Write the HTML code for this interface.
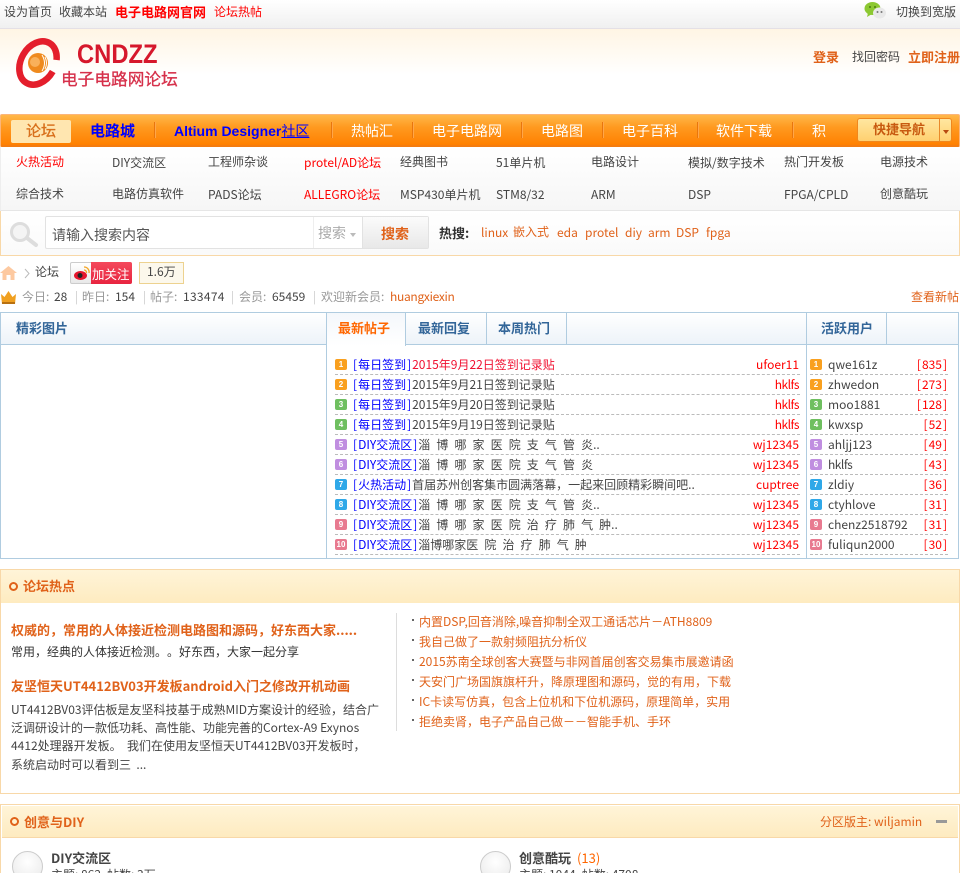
<!DOCTYPE html>
<html><head><meta charset="utf-8"><style>
html{margin:0;padding:0;background:#fff;height:873px;overflow:hidden}
body{margin:0;padding:0;background:#fff;width:960px;height:873px;overflow:hidden;position:relative;font:12px/16px "WenQuanYi Zen Hei","Noto Sans CJK SC",sans-serif;color:#444;text-spacing-trim:space-all}
.t{position:absolute;white-space:nowrap;line-height:16px}
.b{position:absolute;box-sizing:border-box}
.nav{font-size:14px;top:123px;color:#fff}
.o{color:#e0621a}.r{color:#f00}.u{color:#00f}.w{color:#fff}
.bd{font-weight:bold}
.h{font-size:13px}
.sep{position:absolute;top:122px;width:1px;height:16px;background:#e8760c;border-right:1px solid #ffa64a}
.n{position:absolute;width:12px;height:11px;border-radius:2px;color:#fff;font:bold 8px/11px "Liberation Sans",sans-serif;text-align:center}
.d{position:absolute;height:0;border-top:1px dashed #bbb}
.tab{font-weight:bold;color:#369;font-size:13px}
.k{padding:0 1px}
.sp{word-spacing:3.400px}
.dot{position:absolute;left:412px;width:2px;height:2px;background:#666}
</style></head><body>
<div class="b" style="left:0;top:0;width:960px;height:29px;background:linear-gradient(#fff,#f0f0f0);border-bottom:1px solid #e4e0e6"></div>
<span class="t" style="left:4px;top:4px">设为首页</span>
<span class="t" style="left:59px;top:4px">收藏本站</span>
<span class="t bd r" style="left:115px;top:4px;font-size:13px">电子电路网官网</span>
<span class="t r" style="left:214px;top:4px">论坛热帖</span>
<svg class="b" style="left:864px;top:1px" width="23" height="19" viewBox="0 0 23 19"><ellipse cx="8.500" cy="7.500" rx="8" ry="6.500" fill="#8cc832"/><path d="M4 12l-1 4 5-3z" fill="#8cc832"/><ellipse cx="15.500" cy="12" rx="6.500" ry="5.500" fill="#e9e9e9"/><circle cx="13.500" cy="11" r="1" fill="#777"/><circle cx="17.500" cy="11" r="1" fill="#777"/><circle cx="6" cy="6" r="1" fill="#4a7a10"/><circle cx="11" cy="6" r="1" fill="#4a7a10"/></svg>
<span class="t" style="left:896px;top:4px">切换到宽版</span>

<div class="b" style="left:0;top:29px;width:960px;height:46px;background:linear-gradient(#fff5e4,#fff)"></div>
<svg class="b" style="left:14px;top:38px" width="48" height="52" viewBox="0 0 48 52"><ellipse cx="24" cy="25" rx="17" ry="23" transform="rotate(30 24 25)" fill="none" stroke="#e41e2c" stroke-width="6.500" stroke-dasharray="114 13"/><circle cx="24" cy="25" r="10" fill="#ef8a1e"/><circle cx="21" cy="24" r="5" fill="#f9b05a"/><path d="M28 17q5 8 0 16M31 19q3 6 0 12" stroke="#fff" fill="none"/></svg>
<span class="t" style="left:77px;top:41px;font:bold 27px/27px 'Liberation Sans',sans-serif;color:#d6182c;transform:scaleX(.88);transform-origin:left top">CNDZZ</span>
<span class="t" style="left:61px;top:69px;font-size:16.700px;line-height:19px;color:#d6304a;-webkit-text-stroke:.3px #d6304a">电子电路网论坛</span>
<span class="t bd o h" style="left:813px;top:49px">登录</span>
<span class="t" style="left:852px;top:49px">找回密码</span>
<span class="t bd o h" style="left:908px;top:49px">立即注册</span>

<div class="b" style="left:0;top:114px;width:960px;height:33px;border:1px solid #fcb57a;border-bottom:2px solid #f47c10;background:linear-gradient(#ffb84a,#ff9a20 40%,#ff8000);border-radius:2px"></div>
<div class="b" style="left:11px;top:120px;width:60px;height:23px;background:#ffe6b0;border-radius:2px"></div>
<span class="t nav" style="left:26px;color:#d8701c;font-size:15px;-webkit-text-stroke:.3px #d8701c">论坛</span>
<span class="t nav bd" style="left:90px;color:#00f;font-size:15px">电路城</span>
<span class="t nav bd" style="left:174px;color:#00f;font-family:'Liberation Sans','WenQuanYi Zen Hei',sans-serif">Altium Designer<u style="font-weight:normal">社区</u></span>
<span class="t nav" style="left:351px">热帖汇</span>
<span class="t nav" style="left:432px">电子电路网</span>
<span class="t nav" style="left:541px">电路图</span>
<span class="t nav" style="left:622px">电子百科</span>
<span class="t nav" style="left:716px">软件下载</span>
<span class="t nav" style="left:812px">积</span>
<i class="sep" style="left:154px"></i><i class="sep" style="left:331px"></i><i class="sep" style="left:412px"></i><i class="sep" style="left:521px"></i><i class="sep" style="left:602px"></i><i class="sep" style="left:697px"></i><i class="sep" style="left:792px"></i>
<div class="b" style="left:857px;top:118px;width:95px;height:24px;background:linear-gradient(#ffe7a0,#ffd070);border:1px solid #f0871e;border-radius:3px"></div>
<div class="b" style="left:939px;top:119px;width:1px;height:22px;background:#e98a2a"></div>
<span class="t bd h" style="left:873px;top:121px;color:#c85a10">快捷导航</span>
<div class="b" style="left:943px;top:130px;border:3px solid transparent;border-top:4px solid #b84a10;border-bottom:0"></div>

<div class="b" style="left:0;top:147px;width:960px;height:64px;background:linear-gradient(#fff,#f6f6f6);border-bottom:1px solid #e6e6e6;border-left:1px solid #eee"></div>
<span class="t r" style="left:16px;top:154px">火热活动</span>
<span class="t" style="left:112px;top:155px">DIY交流区</span>
<span class="t" style="left:208px;top:154px">工程师杂谈</span>
<span class="t r" style="left:304px;top:155px">protel/AD论坛</span>
<span class="t" style="left:400px;top:154px">经典图书</span>
<span class="t" style="left:496px;top:155px">51单片机</span>
<span class="t" style="left:591px;top:154px">电路设计</span>
<span class="t" style="left:688px;top:155px">模拟/数字技术</span>
<span class="t" style="left:784px;top:154px">热门开发板</span>
<span class="t" style="left:880px;top:154px">电源技术</span>
<span class="t" style="left:16px;top:186px">综合技术</span>
<span class="t" style="left:112px;top:186px">电路仿真软件</span>
<span class="t" style="left:208px;top:187px">PADS论坛</span>
<span class="t r" style="left:304px;top:187px">ALLEGRO论坛</span>
<span class="t" style="left:400px;top:187px">MSP430单片机</span>
<span class="t" style="left:496px;top:187px">STM8/32</span>
<span class="t" style="left:591px;top:187px">ARM</span>
<span class="t" style="left:688px;top:187px">DSP</span>
<span class="t" style="left:784px;top:187px">FPGA/CPLD</span>
<span class="t" style="left:880px;top:186px">创意酷玩</span>

<div class="b" style="left:0;top:211px;width:960px;height:45px;background:linear-gradient(#fff,#fafafa);border:1px solid #f8d8a8;border-top:0"></div>
<svg class="b" style="left:8px;top:221px" width="31" height="27" viewBox="0 0 31 27"><circle cx="12" cy="11" r="8.500" fill="#f4f4f4" stroke="#ddd" stroke-width="3"/><path d="M19 17l9 7" stroke="#ddd" stroke-width="4" stroke-linecap="round"/></svg>
<div class="b" style="left:45px;top:216px;width:384px;height:33px;border:1px solid #e2e2e2;border-radius:2px;background:#fff"></div>
<div class="b" style="left:313px;top:217px;width:1px;height:31px;background:#eee"></div>
<div class="b" style="left:362px;top:217px;width:66px;height:31px;background:linear-gradient(#fbfbfb,#e8e8e8);border-left:1px solid #e2e2e2"></div>
<span class="t" style="left:52px;top:227px;font-size:14px;color:#555">请输入搜索内容</span>
<span class="t" style="left:318px;top:225px;font-size:14px;color:#aaa">搜索</span>
<div class="b" style="left:350px;top:233px;border:3.500px solid transparent;border-top:4px solid #bbb;border-bottom:0"></div>
<span class="t bd o" style="left:381px;top:226px;font-size:14px">搜索</span>
<span class="t bd h" style="left:439px;top:225px;color:#333">热搜:</span>
<span class="t o" style="left:481px;top:225px">linux</span>
<span class="t o" style="left:513px;top:224px">嵌入式</span>
<span class="t o" style="left:557px;top:225px">eda</span>
<span class="t o" style="left:585px;top:225px">protel</span>
<span class="t o" style="left:625px;top:225px">diy</span>
<span class="t o" style="left:648px;top:225px">arm</span>
<span class="t o" style="left:676px;top:225px">DSP</span>
<span class="t o" style="left:706px;top:225px">fpga</span>

<svg class="b" style="left:0;top:266px" width="17" height="14" viewBox="0 0 17 14"><path d="M8.500 0L0 7h2.500v7h4V9h4v5h4V7H17z" fill="#fdc9a0"/></svg>
<svg class="b" style="left:24px;top:268px" width="6" height="11" viewBox="0 0 6 11"><path d="M1 1l4 4.500L1 10" fill="none" stroke="#bbb"/></svg>
<span class="t" style="left:35px;top:264px">论坛</span>
<div class="b" style="left:70px;top:262px;width:62px;height:22px;background:linear-gradient(#fff,#e8e8e8);border:1px solid #ccc;border-radius:2px"></div>
<div class="b" style="left:91px;top:262px;width:41px;height:22px;background:linear-gradient(#f4495c,#e82440);border-radius:0 2px 2px 0"></div>
<svg class="b" style="left:73px;top:265px" width="18" height="16" viewBox="0 0 18 16"><ellipse cx="7.500" cy="10.500" rx="6.500" ry="4.500" fill="#e6162d"/><circle cx="7" cy="10.500" r="2.500" fill="#222"/><path d="M11 2a5 5 0 0 1 5 6M11 5a2.500 2.500 0 0 1 2.500 3" fill="none" stroke="#f5a623" stroke-width="1.300"/></svg>
<span class="t w" style="left:92px;top:266px;font-size:12.500px">加关注</span>
<div class="b" style="left:139px;top:262px;width:45px;height:22px;background:#fcf8ec;border:1px solid #edd28f"></div>
<span class="t" style="left:147px;top:264px">1.6万</span>

<svg class="b" style="left:1px;top:290px" width="15" height="15" viewBox="0 0 15 15"><path d="M0 4l3.500 3L7.500 1l4 6L15 4l-1 10H1z" fill="#f0a020"/><rect x="1" y="12" width="13" height="2" fill="#b87010"/></svg>
<span class="t" style="left:22px;top:289px;color:#999">今日:</span><span class="t" style="left:54px;top:289px">28</span>
<span class="t" style="left:75px;top:289px;color:#ccc">|</span>
<span class="t" style="left:82px;top:289px;color:#999">昨日:</span><span class="t" style="left:115px;top:289px">154</span>
<span class="t" style="left:143px;top:289px;color:#ccc">|</span>
<span class="t" style="left:150px;top:289px;color:#999">帖子:</span><span class="t" style="left:183px;top:289px;letter-spacing:.3px">133474</span>
<span class="t" style="left:231px;top:289px;color:#ccc">|</span>
<span class="t" style="left:239px;top:289px;color:#999">会员:</span><span class="t" style="left:272px;top:289px">65459</span>
<span class="t" style="left:313px;top:289px;color:#ccc">|</span>
<span class="t" style="left:321px;top:289px;color:#999">欢迎新会员:</span><span class="t" style="left:390px;top:289px;color:#e0621a;letter-spacing:-.3px">huangxiexin</span>
<span class="t o" style="left:911px;top:289px">查看新帖</span>

<div class="b" style="left:0;top:312px;width:959px;height:247px;border:1px solid #b0cce0"></div>
<div class="b" style="left:1px;top:313px;width:957px;height:32px;background:linear-gradient(#fff,#edf3f9);border-bottom:1px solid #b0cce0"></div>
<div class="b" style="left:326px;top:313px;width:1px;height:245px;background:#b0cce0"></div>
<div class="b" style="left:806px;top:313px;width:1px;height:245px;background:#b0cce0"></div>
<div class="b" style="left:327px;top:313px;width:79px;height:33px;background:linear-gradient(#f4f7fb,#fff);border-right:1px solid #b0cce0"></div>
<div class="b" style="left:486px;top:313px;width:1px;height:32px;background:#b0cce0"></div>
<div class="b" style="left:566px;top:313px;width:1px;height:32px;background:#b0cce0"></div>
<div class="b" style="left:886px;top:313px;width:1px;height:32px;background:#b0cce0"></div>
<span class="t tab" style="left:16px;top:320px">精彩图片</span>
<span class="t tab" style="left:338px;top:320px;color:#f60">最新帖子</span>
<span class="t tab" style="left:418px;top:320px">最新回复</span>
<span class="t tab" style="left:498px;top:320px">本周热门</span>
<span class="t tab" style="left:821px;top:320px">活跃用户</span>

<i class="n" style="left:335px;top:359px;background:#f9a01f">1</i><span class="t" style="left:352px;top:357px"><span class="u"><span class="k">[</span>每日签到<span class="k">]</span></span><span style="color:#f01030">2015年9月22日签到记录贴</span></span>
<i class="n" style="left:335px;top:379px;background:#f9a01f">2</i><span class="t" style="left:352px;top:377px"><span class="u"><span class="k">[</span>每日签到<span class="k">]</span></span>2015年9月21日签到记录贴</span>
<i class="n" style="left:335px;top:399px;background:#6fbf60">3</i><span class="t" style="left:352px;top:397px"><span class="u"><span class="k">[</span>每日签到<span class="k">]</span></span>2015年9月20日签到记录贴</span>
<i class="n" style="left:335px;top:419px;background:#6fbf60">4</i><span class="t" style="left:352px;top:417px"><span class="u"><span class="k">[</span>每日签到<span class="k">]</span></span>2015年9月19日签到记录贴</span>
<i class="n" style="left:335px;top:439px;background:#c08ee0">5</i><span class="t sp" style="left:352px;top:437px"><span class="u"><span class="k">[</span>DIY交流区<span class="k">]</span></span>淄 博 哪 家 医 院 支 气 管 炎..</span>
<i class="n" style="left:335px;top:459px;background:#c08ee0">6</i><span class="t sp" style="left:352px;top:457px"><span class="u"><span class="k">[</span>DIY交流区<span class="k">]</span></span>淄 博 哪 家 医 院 支 气 管 炎</span>
<i class="n" style="left:335px;top:479px;background:#2fa8e8">7</i><span class="t" style="left:352px;top:477px"><span class="u"><span class="k">[</span>火热活动<span class="k">]</span></span>首届苏州创客集市圆满落幕，一起来回顾精彩瞬间吧..</span>
<i class="n" style="left:335px;top:499px;background:#2fa8e8">8</i><span class="t sp" style="left:352px;top:497px"><span class="u"><span class="k">[</span>DIY交流区<span class="k">]</span></span>淄 博 哪 家 医 院 支 气 管 炎..</span>
<i class="n" style="left:335px;top:519px;background:#e87a90">9</i><span class="t sp" style="left:352px;top:517px"><span class="u"><span class="k">[</span>DIY交流区<span class="k">]</span></span>淄 博 哪 家 医 院 治 疗 肺 气 肿..</span>
<i class="n" style="left:335px;top:539px;background:#e87a90">10</i><span class="t sp" style="left:352px;top:537px"><span class="u"><span class="k">[</span>DIY交流区<span class="k">]</span></span>淄博哪家医 院 治 疗 肺 气 肿</span>

<span class="t r" style="right:161px;top:357px">ufoer11</span>
<span class="t r" style="right:161px;top:377px;letter-spacing:-.5px">hklfs</span>
<span class="t r" style="right:161px;top:397px;letter-spacing:-.5px">hklfs</span>
<span class="t r" style="right:161px;top:417px;letter-spacing:-.5px">hklfs</span>
<span class="t r" style="right:161px;top:437px">wj12345</span>
<span class="t r" style="right:161px;top:457px">wj12345</span>
<span class="t r" style="right:161px;top:477px">cuptree</span>
<span class="t r" style="right:161px;top:497px">wj12345</span>
<span class="t r" style="right:161px;top:517px">wj12345</span>
<span class="t r" style="right:161px;top:537px">wj12345</span>

<i class="d" style="left:335px;top:374px;width:465px"></i><i class="d" style="left:335px;top:394px;width:465px"></i><i class="d" style="left:335px;top:414px;width:465px"></i><i class="d" style="left:335px;top:434px;width:465px"></i><i class="d" style="left:335px;top:454px;width:465px"></i><i class="d" style="left:335px;top:474px;width:465px"></i><i class="d" style="left:335px;top:494px;width:465px"></i><i class="d" style="left:335px;top:514px;width:465px"></i><i class="d" style="left:335px;top:534px;width:465px"></i><i class="d" style="left:335px;top:554px;width:465px"></i>
<i class="d" style="left:810px;top:374px;width:138px"></i><i class="d" style="left:810px;top:394px;width:138px"></i><i class="d" style="left:810px;top:414px;width:138px"></i><i class="d" style="left:810px;top:434px;width:138px"></i><i class="d" style="left:810px;top:454px;width:138px"></i><i class="d" style="left:810px;top:474px;width:138px"></i><i class="d" style="left:810px;top:494px;width:138px"></i><i class="d" style="left:810px;top:514px;width:138px"></i><i class="d" style="left:810px;top:534px;width:138px"></i><i class="d" style="left:810px;top:554px;width:138px"></i>

<i class="n" style="left:810px;top:359px;background:#f9a01f">1</i><span class="t" style="left:828px;top:357px">qwe161z</span><span class="t r" style="right:12px;top:357px"><span class="k">[</span>835<span class="k">]</span></span>
<i class="n" style="left:810px;top:379px;background:#f9a01f">2</i><span class="t" style="left:828px;top:377px">zhwedon</span><span class="t r" style="right:12px;top:377px"><span class="k">[</span>273<span class="k">]</span></span>
<i class="n" style="left:810px;top:399px;background:#6fbf60">3</i><span class="t" style="left:828px;top:397px">moo1881</span><span class="t r" style="right:12px;top:397px"><span class="k">[</span>128<span class="k">]</span></span>
<i class="n" style="left:810px;top:419px;background:#6fbf60">4</i><span class="t" style="left:828px;top:417px">kwxsp</span><span class="t r" style="right:12px;top:417px"><span class="k">[</span>52<span class="k">]</span></span>
<i class="n" style="left:810px;top:439px;background:#c08ee0">5</i><span class="t" style="left:828px;top:437px">ahljj123</span><span class="t r" style="right:12px;top:437px"><span class="k">[</span>49<span class="k">]</span></span>
<i class="n" style="left:810px;top:459px;background:#c08ee0">6</i><span class="t" style="left:828px;top:457px;letter-spacing:-.5px">hklfs</span><span class="t r" style="right:12px;top:457px"><span class="k">[</span>43<span class="k">]</span></span>
<i class="n" style="left:810px;top:479px;background:#2fa8e8">7</i><span class="t" style="left:828px;top:477px">zldiy</span><span class="t r" style="right:12px;top:477px"><span class="k">[</span>36<span class="k">]</span></span>
<i class="n" style="left:810px;top:499px;background:#2fa8e8">8</i><span class="t" style="left:828px;top:497px">ctyhlove</span><span class="t r" style="right:12px;top:497px"><span class="k">[</span>31<span class="k">]</span></span>
<i class="n" style="left:810px;top:519px;background:#e87a90">9</i><span class="t" style="left:828px;top:517px">chenz2518792</span><span class="t r" style="right:12px;top:517px"><span class="k">[</span>31<span class="k">]</span></span>
<i class="n" style="left:810px;top:539px;background:#e87a90">10</i><span class="t" style="left:828px;top:537px">fuliqun2000</span><span class="t r" style="right:12px;top:537px"><span class="k">[</span>30<span class="k">]</span></span>

<div class="b" style="left:0;top:569px;width:960px;height:225px;border:1px solid #f8d8a8"></div>
<div class="b" style="left:1px;top:570px;width:958px;height:33px;background:linear-gradient(#fff4d8,#feebc0)"></div>
<div class="b" style="left:9px;top:582px;width:9px;height:9px;border:2px solid #e0621a;border-radius:50%;background:#fff3d0"></div>
<span class="t bd o h" style="left:23px;top:578px">论坛热点</span>
<span class="t bd o h" style="left:11px;top:622px">权威的，常用的人体接近检测电路图和源码，好东西大家.....</span>
<span class="t" style="left:11px;top:644px;color:#333">常用，经典的人体接近检测。。好东西，大家一起分享</span>
<span class="t bd o h" style="left:11px;top:678px">友坚恒天UT4412BV03开发板android入门之修改开机动画</span>
<div class="t" style="left:11px;top:701px;line-height:18.200px;color:#444">UT4412BV03评估板是友坚科技基于成熟MID方案设计的经验，结合广<br>泛调研设计的一款低功耗、高性能、功能完善的Cortex-A9 Exynos<br>4412处理器开发板。&nbsp;&nbsp;我们在使用友坚恒天UT4412BV03开发板时，<br>系统启动时可以看到三&nbsp;&nbsp;...</div>
<div class="b" style="left:396px;top:613px;width:1px;height:118px;background:#ddd"></div>
<i class="dot" style="top:619px"></i><span class="t o" style="left:419px;top:614px">内置DSP,回音消除,噪音抑制全双工通话芯片－ATH8809</span>
<i class="dot" style="top:639px"></i><span class="t o" style="left:419px;top:634px">我自己做了一款射频阻抗分析仪</span>
<i class="dot" style="top:659px"></i><span class="t o" style="left:419px;top:654px">2015苏南全球创客大赛暨与非网首届创客交易集市展邀请函</span>
<i class="dot" style="top:679px"></i><span class="t o" style="left:419px;top:674px">天安门广场国旗旗杆升，降原理图和源码，觉的有用，下载</span>
<i class="dot" style="top:699px"></i><span class="t o" style="left:419px;top:694px">IC卡读写仿真，包含上位机和下位机源码，原理简单，实用</span>
<i class="dot" style="top:719px"></i><span class="t o" style="left:419px;top:714px">拒绝卖肾，电子产品自己做－－智能手机、手环</span>

<div class="b" style="left:0;top:804px;width:960px;height:69px;border:1px solid #f8d8a8;border-width:1px 1px 0"></div>
<div class="b" style="left:2px;top:806px;width:956px;height:32px;background:linear-gradient(#fff4d8,#feebc0);border-bottom:1px solid #f8d8a8"></div>
<div class="b" style="left:10px;top:817px;width:9px;height:9px;border:2px solid #e0621a;border-radius:50%;background:#fff3d0"></div>
<span class="t bd o h" style="left:24px;top:814px">创意与DIY</span>
<span class="t o" style="left:820px;top:814px">分区版主: wiljamin</span>
<div class="b" style="left:936px;top:820px;width:11px;height:3px;background:#999"></div>
<div class="b" style="left:12px;top:851px;width:31px;height:31px;border-radius:50%;background:radial-gradient(circle at 50% 35%,#fff,#e8e8e8);border:1px solid #ccc"></div>
<div class="b" style="left:480px;top:851px;width:31px;height:31px;border-radius:50%;background:radial-gradient(circle at 50% 35%,#fff,#e8e8e8);border:1px solid #ccc"></div>
<span class="t bd h" style="left:51px;top:850px">DIY交流区</span>
<span class="t" style="left:51px;top:867px">主题: 862, 帖数: 3万</span>
<span class="t bd h" style="left:519px;top:850px">创意酷玩</span><span class="t h" style="left:577px;top:850px;color:#f60">(13)</span>
<span class="t" style="left:519px;top:867px">主题: 1044, 帖数: 4708</span>
</body></html>
